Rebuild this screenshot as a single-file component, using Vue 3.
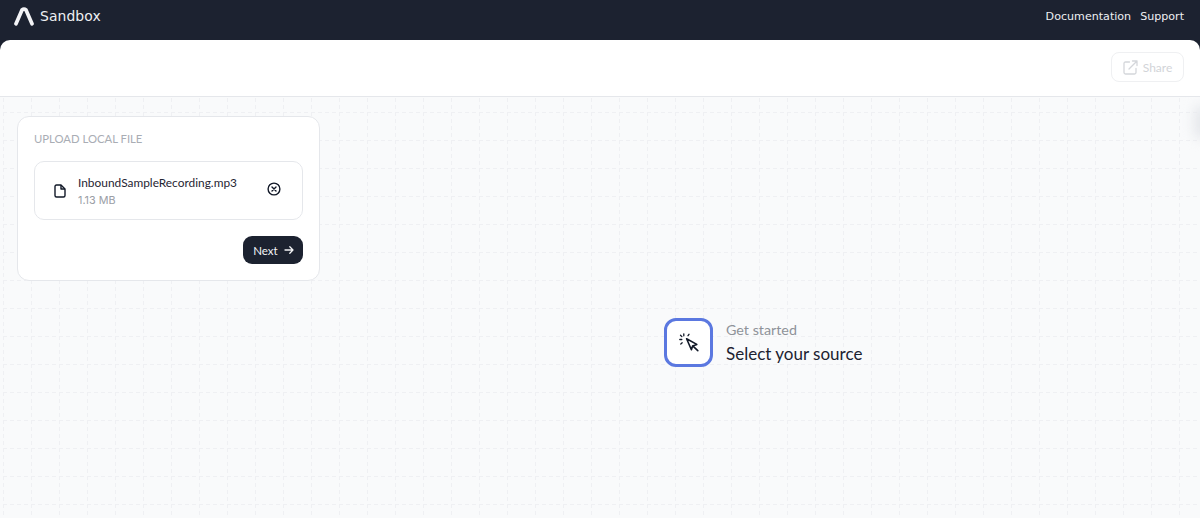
<script setup>
const title = 'UPLOAD LOCAL FILE'
</script>

<template>
  <div class="page">
    <header class="nav">
      <div class="brand">
        <svg class="logo" width="20" height="19" viewBox="0 0 20 19" fill="none">
          <path d="M2 16.8 L8 2.9 Q10 1.2 12 2.9 L18 16.8" stroke="#f3f4f6" stroke-width="3.7" stroke-linecap="round" stroke-linejoin="round" />
        </svg>
        <span class="brand-name">Sandbox</span>
      </div>
      <nav class="links">
        <span>Documentation</span>
        <span>Support</span>
      </nav>
    </header>

    <main class="sheet">
      <div class="toolbar">
        <div class="share">
          <svg width="15" height="15" viewBox="0 0 15 15" fill="none" stroke="#d4d6da" stroke-width="1.3" stroke-linecap="round" stroke-linejoin="round">
            <path d="M6.5 2H2.5Q1 2 1 3.5V12.5Q1 14 2.5 14H11.5Q13 14 13 12.5V8.5" />
            <path d="M6 9 14 1M9.5 1H14V5.5" />
          </svg>
          <span>Share</span>
        </div>
      </div>

      <section class="canvas">
        <svg class="grid" width="1200" height="422">
          <defs>
            <pattern id="cell" width="28" height="28" patternUnits="userSpaceOnUse" x="3" y="15">
              <path d="M0 .5H28M.5 0V28" stroke="#eff0f3" stroke-width="1" stroke-dasharray="4 3" fill="none" />
            </pattern>
          </defs>
          <rect width="1200" height="422" fill="url(#cell)" />
        </svg>
        <div class="edge-shade"></div>

        <div class="upload-card">
          <div class="card-title">{{ title }}</div>
          <div class="file-row">
            <svg class="file-icon" width="14" height="14" viewBox="0 0 14 14" fill="none" stroke="#111827" stroke-width="1.4" stroke-linejoin="round">
              <path d="M2 2.5Q2 1 3.5 1H8L12 5V11.5Q12 13 10.5 13H3.5Q2 13 2 11.5Z" />
              <path d="M8 1V5H12" />
            </svg>
            <div class="file-info">
              <div class="file-name">InboundSampleRecording.mp3</div>
              <div class="file-size">1.13 MB</div>
            </div>
            <svg class="remove" width="14" height="14" viewBox="0 0 14 14" fill="none" stroke="#111827" stroke-width="1.4" stroke-linecap="round">
              <circle cx="7" cy="7" r="5.9" />
              <path d="M5 5 9 9M9 5 5 9" />
            </svg>
          </div>
          <div class="actions">
            <button class="next">
              <span>Next</span>
              <svg width="10" height="10" viewBox="0 0 10 10" fill="none" stroke="#f3f4f6" stroke-width="1.3" stroke-linecap="round" stroke-linejoin="round">
                <path d="M1 5H9M5.8 1.8 9 5 5.8 8.2" />
              </svg>
            </button>
          </div>
        </div>

        <div class="prompt">
          <div class="prompt-icon">
            <svg width="20" height="20" viewBox="0 0 20 20" fill="none" stroke="#111827" stroke-width="1.6" stroke-linecap="round" stroke-linejoin="round">
              <path d="M7.6 5.8 17.8 11.4 13.6 13 12.4 16.8Z" fill="#fff" />
              <path d="M14 13.2 18.8 17.6" />
              <path d="M4.8 .8V2.8M.8 6.5H2.8M1.5 2.2 2.9 3.6M10 1.3 9 2.7M1.8 11 3.2 9.8" stroke-width="1.3" />
            </svg>
          </div>
          <div class="prompt-text">
            <div class="prompt-sub">Get started</div>
            <div class="prompt-main">Select your source</div>
          </div>
        </div>
      </section>
    </main>
  </div>
</template>

<style>
html, body { margin: 0; background: #1c2230; }
</style>

<style scoped>
.page {
  width: 1200px;
  height: 518px;
  display: flex;
  flex-direction: column;
  overflow: hidden;
  background: #1c2230;
  font-family: "Lato", "Liberation Sans", sans-serif;
}
.nav {
  height: 40px;
  flex: none;
  display: flex;
  align-items: center;
  justify-content: space-between;
  box-sizing: border-box;
  padding: 0 16px 8px 14px;
}
.brand { display: flex; align-items: center; gap: 6px; }
.logo { display: block; }
.brand-name {
  font-family: "DejaVu Sans", sans-serif;
  font-size: 13.9px;
  color: #eef0f3;
  letter-spacing: 0.1px;
}
.links {
  display: flex;
  gap: 9px;
  font-family: "DejaVu Sans", sans-serif;
  font-size: 11.1px;
  color: #eef0f3;
}
.sheet {
  flex: 1;
  display: flex;
  flex-direction: column;
  background: #fff;
  border-radius: 10px 10px 0 0;
  overflow: hidden;
}
.toolbar {
  height: 57px;
  flex: none;
  box-sizing: border-box;
  border-bottom: 1px solid #e5e7eb;
  display: flex;
  align-items: flex-start;
  justify-content: flex-end;
  padding: 12px 16px 0 0;
}
.share {
  width: 73px;
  height: 30px;
  box-sizing: border-box;
  border: 1px solid #eff0f2;
  border-radius: 8px;
  display: flex;
  align-items: center;
  justify-content: center;
  gap: 5px;
  font-size: 12px;
  color: #d2d4d8;
}
.canvas {
  flex: 1;
  position: relative;
  background: #f9fafb;
  padding: 19px 0 0 17px;
  overflow: hidden;
}
.grid {
  position: absolute;
  left: 0;
  top: 0;
}
.edge-shade {
  position: absolute;
  right: -10px;
  top: 8px;
  width: 16px;
  height: 34px;
  border-radius: 8px;
  background: #e5e7eb;
  filter: blur(6px);
}
.upload-card {
  position: relative;
  width: 303px;
  height: 165px;
  box-sizing: border-box;
  background: #fff;
  border: 1px solid #e5e7eb;
  border-radius: 12px;
  padding: 15px 16px 16px;
}
.card-title {
  font-size: 11.3px;
  line-height: 13px;
  color: #a9adb4;
}
.file-row {
  margin-top: 16px;
  height: 59px;
  box-sizing: border-box;
  border: 1px solid #e5e7eb;
  border-radius: 10px;
  display: flex;
  align-items: center;
  padding: 0 21px 0 18px;
}
.file-icon { flex: none; }
.file-info { flex: 1; margin-left: 11px; padding-top: 1px; }
.file-name {
  font-size: 11.9px;
  line-height: 16px;
  color: #1f2533;
}
.file-size {
  margin-top: 3px;
  font-family: "Inter", sans-serif;
  font-size: 10.8px;
  line-height: 14px;
  color: #9a9ea6;
}
.remove { flex: none; margin-top: -3px; }
.actions {
  margin-top: 16px;
  display: flex;
  justify-content: flex-end;
}
.next {
  width: 60px;
  height: 28px;
  border: 0;
  padding: 0 0 0 1px;
  border-radius: 9px;
  background: #1c2230;
  color: #f3f4f6;
  font-family: inherit;
  font-size: 11.5px;
  display: flex;
  align-items: center;
  justify-content: center;
  gap: 6px;
}
.prompt {
  position: absolute;
  left: 664px;
  top: 221px;
  display: flex;
  align-items: center;
  gap: 13px;
}
.prompt-icon {
  width: 49px;
  height: 49px;
  box-sizing: border-box;
  background: #fff;
  border: 3px solid #5b78e0;
  border-radius: 12px;
  display: flex;
  align-items: center;
  justify-content: center;
}
.prompt-sub {
  font-size: 14.3px;
  line-height: 18px;
  color: #8e9299;
}
.prompt-main {
  margin-top: 5px;
  font-size: 17px;
  line-height: 20px;
  color: #1c2230;
}
</style>
